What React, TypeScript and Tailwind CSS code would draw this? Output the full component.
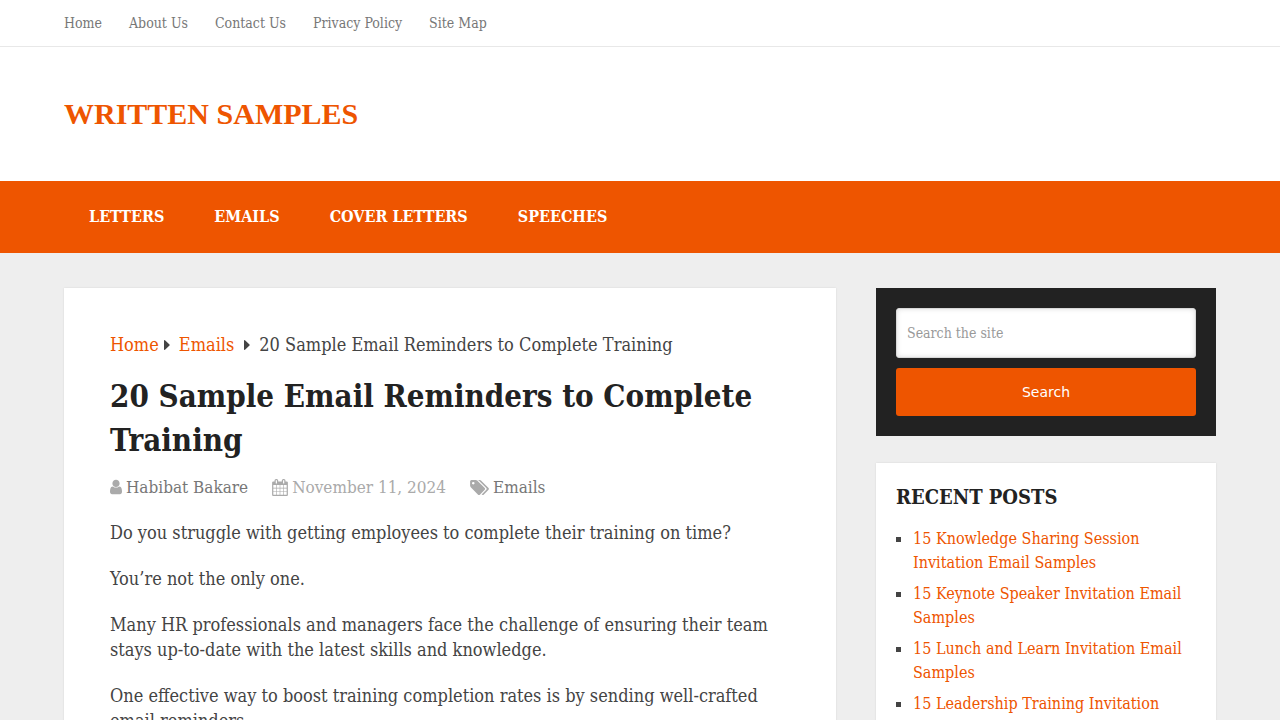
import type { ReactNode } from "react";

const TOP_LINKS = ["Home", "About Us", "Contact Us", "Privacy Policy", "Site Map"];
const MAIN_LINKS = ["Letters", "Emails", "Cover Letters", "Speeches"];

const RECENT_POSTS = [
  "15 Knowledge Sharing Session Invitation Email Samples",
  "15 Keynote Speaker Invitation Email Samples",
  "15 Lunch and Learn Invitation Email Samples",
  "15 Leadership Training Invitation Email Samples",
];

const PARAGRAPHS = [
  "Do you struggle with getting employees to complete their training on time?",
  "You’re not the only one.",
  "Many HR professionals and managers face the challenge of ensuring their team stays up-to-date with the latest skills and knowledge.",
  "One effective way to boost training completion rates is by sending well-crafted email reminders.",
];

export default function App() {
  return (
    <div className="min-h-screen bg-[#eeeeee] font-['DejaVu_Serif_Condensed','DejaVu_Serif',serif] text-[#444444]">
      <Header />
      <div className="mx-auto flex w-[90%] max-w-6xl items-start gap-10 pt-[35px]">
        <Article />
        <Sidebar />
      </div>
    </div>
  );
}

function Container({ children }: { children: ReactNode }) {
  return <div className="mx-auto w-[90%] max-w-6xl">{children}</div>;
}

function Header() {
  return (
    <header>
      <div className="border-b border-[#e8e8e8] bg-white">
        <Container>
          <nav aria-label="Secondary" className="flex gap-[27px] py-[13px] text-[14px] leading-5 text-[#777777]">
            {TOP_LINKS.map((label) => (
              <a key={label} href="#" className="whitespace-nowrap hover:text-[#ee5500]">{label}</a>
            ))}
          </nav>
        </Container>
      </div>

      <div className="bg-white py-[42px]">
        <Container>
          <a href="#" className="block font-['Liberation_Serif',serif] text-[30px] font-bold leading-[50px] text-[#ee5500]">
            WRITTEN SAMPLES
          </a>
        </Container>
      </div>

      <div className="bg-[#ee5500]">
        <Container>
          <nav aria-label="Main" className="flex text-[16px] font-bold uppercase leading-6 text-white">
            {MAIN_LINKS.map((label) => (
              <a key={label} href="#" className="whitespace-nowrap px-[25px] py-6">{label}</a>
            ))}
          </nav>
        </Container>
      </div>
    </header>
  );
}

function Article() {
  return (
    <article className="min-w-0 flex-1 bg-white px-[46px] pt-[44px] pb-10 shadow-[0_0_2px_rgba(0,0,0,0.1)]">
      <nav aria-label="Breadcrumb" className="flex items-center text-[18px] leading-[26px]">
        <a href="#" className="text-[#ee5500]">Home</a>
        <Caret className="mr-[9px] ml-1" />
        <a href="#" className="text-[#ee5500]">Emails</a>
        <Caret className="mx-[9px]" />
        <span>20 Sample Email Reminders to Complete Training</span>
      </nav>

      <h1 className="mt-4 text-[31px] font-bold leading-[44px] text-[#222222]">
        20 Sample Email Reminders to Complete Training
      </h1>

      <div className="mt-3 flex items-center gap-6 text-[17px] leading-[26px] text-[#aaaaaa]">
        <span className="flex items-center gap-1">
          <UserIcon />
          <a href="#" className="text-[#777777]">Habibat Bakare</a>
        </span>
        <span className="flex items-center gap-1">
          <CalendarIcon />
          <time dateTime="2024-11-11">November 11, 2024</time>
        </span>
        <span className="flex items-center gap-1">
          <TagsIcon />
          <a href="#" className="text-[#777777]">Emails</a>
        </span>
      </div>

      <div className="mt-5 space-y-[21px] text-[18px] leading-[25px]">
        {PARAGRAPHS.map((text) => (
          <p key={text}>{text}</p>
        ))}
      </div>
    </article>
  );
}

function Sidebar() {
  return (
    <aside className="w-[340px] shrink-0">
      <form className="bg-[#222222] p-5" onSubmit={(e) => e.preventDefault()}>
        <input
          type="search"
          aria-label="Search the site"
          placeholder="Search the site"
          className="block h-[50px] w-full rounded-[3px] border border-[#d8d8d8] bg-white px-[10px] text-[14px] shadow-[inset_0_0_5px_#dddddd] outline-none placeholder:text-[#999999]"
        />
        <button type="submit" className="mt-[10px] block h-12 w-full rounded-[3px] bg-[#ee5500] font-['DejaVu_Sans',sans-serif] text-[14px] text-white">
          Search
        </button>
      </form>

      <section className="mt-[27px] bg-white p-5 shadow-[0_0_2px_rgba(0,0,0,0.1)]">
        <h3 className="text-[20px] font-bold uppercase leading-7 text-[#222222]">Recent Posts</h3>
        <ul className="mt-4 space-y-[7px] text-[16px] leading-6">
          {RECENT_POSTS.map((title) => (
            <li key={title} className="flex gap-3">
              <span className="mt-[10px] size-[5px] shrink-0 bg-[#444444]" />
              <a href="#" className="text-[#ee5500]">{title}</a>
            </li>
          ))}
        </ul>
      </section>
    </aside>
  );
}

function Caret({ className }: { className: string }) {
  return (
    <svg viewBox="0 0 7 12" className={`h-3 w-[7px] shrink-0 ${className}`} fill="currentColor" aria-hidden="true">
      <path d="M1 1.500v9q.4.8 1 .2L6.500 6.600q.5-.6 0-1.200L2 1.300q-.6-.6-1 .2z" />
    </svg>
  );
}

function UserIcon() {
  return (
    <svg viewBox="256 128 1280 1536" className="h-4 w-3 shrink-0" fill="currentColor" aria-hidden="true">
      <path d="M1536 1399q0 109-62.500 187t-150.500 78h-854q-88 0-150.500-78t-62.500-187q0-85 8.500-160.500t31.500-152 58.500-131 94-89 134.500-34.500q131 128 313 128t313-128q76 0 134.500 34.500t94 89 58.500 131 31.500 152 8.500 160.500zm-256-887q0 159-112.500 271.500t-271.500 112.500-271.500-112.500-112.500-271.500 112.500-271.500 271.500-112.500 271.500 112.500 112.500 271.500z" />
    </svg>
  );
}

function CalendarIcon() {
  return (
    <svg viewBox="64 0 1664 1792" className="h-[17px] w-4 shrink-0" fill="currentColor" aria-hidden="true">
      <path d="M192 1664h288v-288h-288v288zm352 0h320v-288h-320v288zm-352-352h288v-320h-288v320zm352 0h320v-320h-320v320zm-352-384h288v-288h-288v288zm736 736h320v-288h-320v288zm-384-736h320v-288h-320v288zm768 736h288v-288h-288v288zm-384-352h320v-320h-320v320zm-352-864v-288q0-13-9.500-22.500t-22.500-9.500h-64q-13 0-22.500 9.500t-9.500 22.500v288q0 13 9.500 22.500t22.500 9.500h64q13 0 22.500-9.500t9.500-22.500zm736 864h288v-320h-288v320zm-384-384h320v-288h-320v288zm384 0h288v-288h-288v288zm32-480v-288q0-13-9.500-22.500t-22.500-9.500h-64q-13 0-22.500 9.500t-9.500 22.500v288q0 13 9.500 22.500t22.500 9.500h64q13 0 22.500-9.500t9.500-22.500zm384-64v1280q0 52-38 90t-90 38h-1408q-52 0-90-38t-38-90v-1280q0-52 38-90t90-38h128v-96q0-66 47-113t113-47h64q66 0 113 47t47 113v96h384v-96q0-66 47-113t113-47h64q66 0 113 47t47 113v96h128q52 0 90 38t38 90z" />
    </svg>
  );
}

function TagsIcon() {
  return (
    <svg viewBox="0 -1408 1899 1515" className="h-[15px] w-[19px] shrink-0" fill="currentColor" aria-hidden="true">
      <path
        transform="scale(1 -1)"
        d="M448 1088q0 53-37.500 90.500t-90.500 37.500t-90.500-37.500t-37.500-90.500t37.500-90.500t90.500-37.500t90.500 37.500t37.500 90.500zM1515 512q0-53-37-90l-491-492q-39-37-91-37q-53 0-90 37l-715 716q-38 37-64.500 101t-26.500 117v416q0 52 38 90t90 38h416q53 0 117-26.500t102-64.500l715-714q37-39 37-91zM1899 512q0-53-37-90l-491-492q-39-37-91-37q-36 0-59 14t-53 45l470 470q37 37 37 90q0 52-37 91l-715 714q-38 38-102 64.500t-117 26.500h224q53 0 117-26.500t102-64.500l715-714q37-39 37-91z"
      />
    </svg>
  );
}
